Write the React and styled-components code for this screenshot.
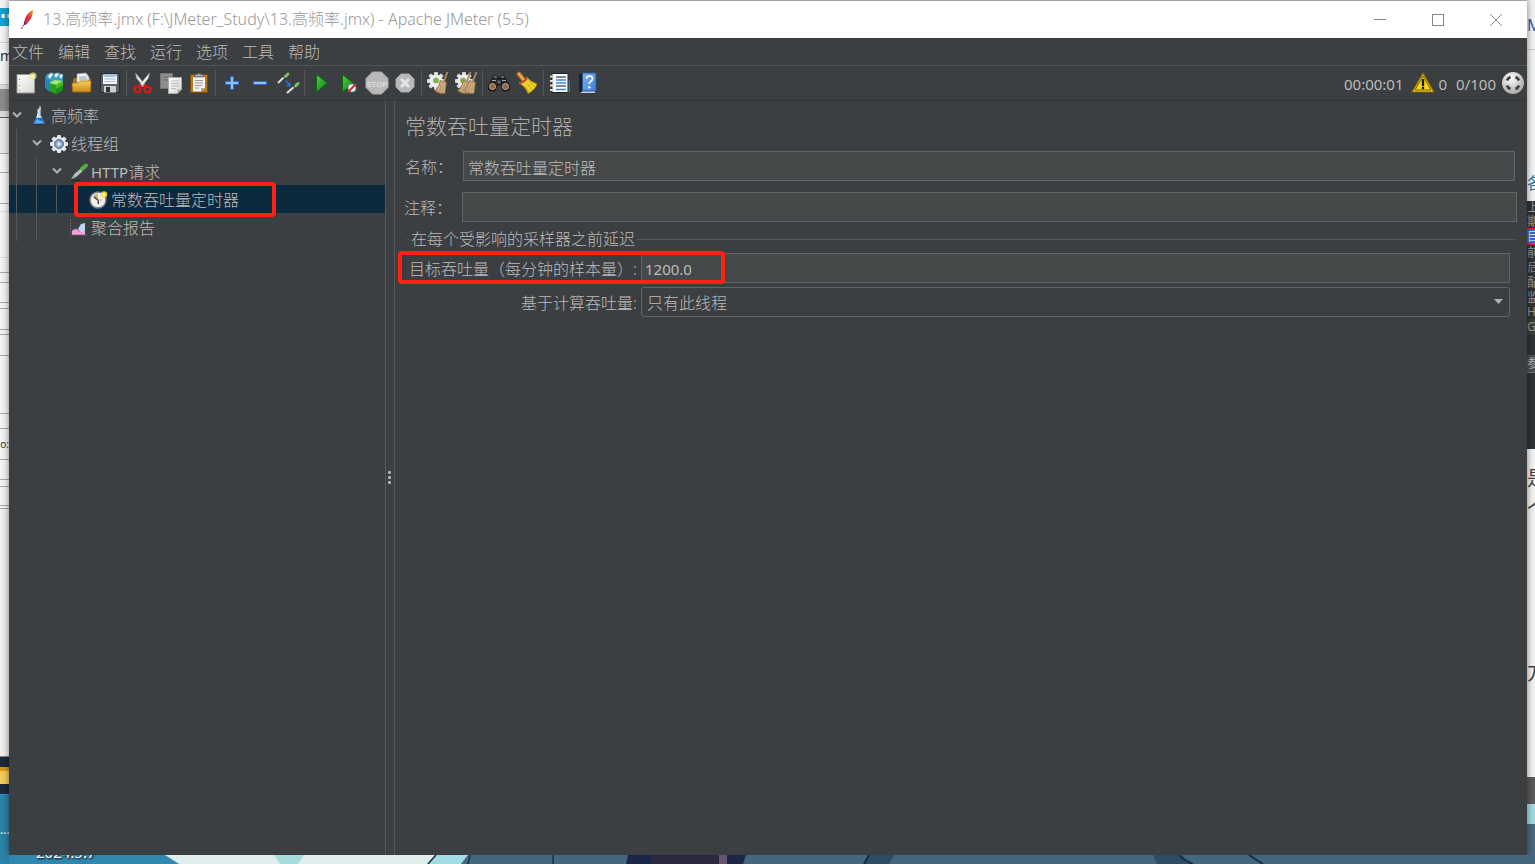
import React from "react";
import styled, { createGlobalStyle, css } from "styled-components";

const Global = createGlobalStyle`
  * { box-sizing: border-box; }
  body { margin: 0; overflow: hidden; }
  body, button, input, select {
    font-family: "Noto Sans", "Noto Sans CJK SC", sans-serif;
    font-size: 16px;
    font-weight: 300;
  }
`;

/* ---------- desktop behind the window ---------- */
const Desktop = styled.div`
  display: grid;
  grid-template-columns: 9px minmax(0, 1fr) 8px;
  grid-template-rows: minmax(0, 1fr) 9px;
  height: 100vh;
  background: #2c83a8;
`;
const Strip = styled.div`
  display: flex;
  flex-direction: column;
  overflow: hidden;
  grid-row: ${(p) => (p.$full ? "1 / 3" : "1")};
`;
const Slice = styled.div`
  flex: ${(p) => (p.$grow ? "1 1 0" : "none")};
  height: ${(p) => p.$h}px;
  display: flex;
  align-items: center;
  justify-content: ${(p) => (p.$end ? "flex-end" : "flex-start")};
  overflow: hidden;
  white-space: nowrap;
  line-height: 1;
  font-size: ${(p) => p.$size || 12}px;
  font-weight: 400;
  color: ${(p) => p.$color || "#444"};
  background: ${(p) => p.$bg || "#f4f4f4"};
  border-bottom: ${(p) => (p.$line ? `1px solid ${p.$line}` : "0")};
`;
const Wallpaper = styled.div`
  grid-column: 2 / 4;
  position: relative;
  overflow: hidden;
  svg { display: block; width: 100%; height: 9px; }
`;
const DesktopLabel = styled.span`
  position: absolute;
  left: 27px;
  bottom: 6px;
  line-height: 12px;
  font-size: 15px;
  font-weight: 400;
  color: #fff;
  text-shadow: 1px 1px 2px #000;
`;

/* ---------- window frame ---------- */
const Window = styled.main`
  position: relative;
  grid-column: 2;
  grid-row: 1;
  display: flex;
  flex-direction: column;
  min-height: 0;
  background: #3c3f41;
  color: #bbbbbb;
  border-top: 1px solid #a3a3a3;
  box-shadow: 0 0 7px rgba(0, 0, 0, 0.5);
`;
const TitleBar = styled.header`
  display: flex;
  align-items: center;
  height: 37px;
  flex: none;
  padding: 0 2px 0 9px;
  background: #fff;
  color: #999;
`;
const Title = styled.h1`
  flex: 1;
  margin: 0 0 0 7px;
  padding-bottom: 2px;
  font-size: 16px;
  font-weight: 300;
  line-height: 24px;
  white-space: nowrap;
`;
const Latin = styled.span`
  font-size: ${(p) => (p.$title ? 16 : 15)}px;
  font-weight: ${(p) => (p.$title ? 300 : 400)};
`;
const WindowButton = styled.button`
  display: grid;
  place-items: center;
  width: 58px;
  height: 36px;
  padding: 0;
  border: 0;
  background: none;
  color: #888;
`;
const MenuBar = styled.nav`
  display: flex;
  gap: 14px;
  flex: none;
  height: 28px;
  padding: 0 3px;
  border-bottom: 1px solid #515658;
`;
const MenuItem = styled.button`
  padding: 0;
  border: 0;
  background: none;
  color: inherit;
  line-height: 26px;
`;
const ToolBar = styled.div`
  display: flex;
  align-items: center;
  flex: none;
  height: 35px;
  padding: 0 2px 0 3px;
  border-bottom: 1px solid #333638;
`;
const ToolButton = styled.button`
  display: grid;
  place-items: center;
  width: 28px;
  height: 28px;
  padding: 0;
  border: 0;
  background: none;
`;
const Separator = styled.span`
  width: 1px;
  height: 26px;
  margin: 0 2px;
  background: #555758;
`;
const Status = styled.div`
  display: flex;
  align-items: center;
  margin-left: auto;
  font-size: 15px;
  font-weight: 400;
  line-height: 24px;
`;
const Count = styled.output`
  padding-top: 2px;
  margin: 0 5px 0 ${(p) => (p.$after ? 2 : 4)}px;
`;

/* ---------- tree ---------- */
const Body = styled.div`
  display: grid;
  grid-template-columns: 376px 10px minmax(0, 1fr);
  flex: 1;
  min-height: 0;
`;
const Tree = styled.ul`
  margin: 0;
  padding: 0;
  list-style: none;
`;
const TreeRow = styled.li`
  position: relative;
  display: flex;
  align-items: center;
  height: 28px;
  white-space: nowrap;
  background: ${(p) => (p.$selected ? "#0d293e" : "transparent")};
`;
const Guide = styled.span`
  width: 20px;
  height: 28px;
  padding-left: 7px;
  &::before {
    content: "";
    display: block;
    width: 1px;
    height: 100%;
    background: ${(p) => (p.$hidden ? "transparent" : "#54585a")};
  }
`;
const Toggle = styled.button`
  display: grid;
  place-items: center;
  width: 16px;
  height: 28px;
  margin-right: 4px;
  padding: 0;
  border: 0;
  background: none;
`;
const NodeIcon = styled.span`
  display: grid;
  width: 20px;
  height: 20px;
  padding-top: 1px;
  margin-right: 2px;
`;
const NodeName = styled.span`
  padding-top: 2px;
  line-height: 28px;
`;
const RedMark = styled.span`
  position: absolute;
  border: 4px solid #ff2113;
  border-radius: 4px;
  pointer-events: none;
  ${(p) =>
    p.$kind === "node"
      ? css`left: 65px; width: 202px; top: -3px; height: 35px;`
      : css`left: -11px; width: 327px; top: -2px; height: 33px;`}
`;
const Splitter = styled.div`
  display: flex;
  flex-direction: column;
  align-items: center;
  justify-content: center;
  gap: 2px;
  padding: 0 1px 2px 0;
  border: solid #55585a;
  border-width: 0 1px;
`;
const Dot = styled.i`
  width: 3px;
  height: 3px;
  border-radius: 1px;
  background: #b5b5b5;
`;

/* ---------- editor panel ---------- */
const Panel = styled.section`
  display: flex;
  flex-direction: column;
  min-width: 0;
`;
const Heading = styled.h2`
  margin: 11px 10px;
  font-size: 21px;
  line-height: 28px;
  font-weight: 300;
  color: #acacac;
`;
const FieldRow = styled.div`
  display: grid;
  grid-template-columns: 58px minmax(0, 1fr);
  align-items: center;
  padding: ${(p) => (p.$wide ? "0 10px 0 9px" : "0 12px 0 10px")};
  margin-bottom: ${(p) => (p.$wide ? 7 : 11)}px;
`;
const Label = styled.label`
  padding-top: 2px;
  line-height: 28px;
  white-space: nowrap;
  text-align: ${(p) => (p.$right ? "right" : "left")};
`;
const TextField = styled.input`
  width: 100%;
  height: 30px;
  padding: 2px 4px 0 ${(p) => (p.$number ? 3 : 4)}px;
  border: 1px solid #646464;
  border-radius: 0;
  outline: 0;
  background: #45494a;
  color: #bbbbbb;
  font-size: ${(p) => (p.$number ? 15 : 16)}px;
  font-weight: ${(p) => (p.$number ? 400 : 300)};
`;
const Group = styled.fieldset`
  min-width: 0;
  margin: 0 12px;
  padding: 4px 5px 0 2px;
  border: 0;
  border-top: 1px solid #55585a;
`;
const Legend = styled.legend`
  padding: 0 2px;
  line-height: 20px;
`;
const GroupGrid = styled.div`
  position: relative;
  display: grid;
  grid-template-columns: 228px minmax(0, 1fr);
  gap: 4px;
`;
const SelectBox = styled.div`
  position: relative;
  svg { position: absolute; right: 7px; top: 12px; pointer-events: none; }
`;
const Select = styled.select`
  display: block;
  width: 100%;
  height: 30px;
  padding: 2px 5px 0;
  appearance: none;
  border: 1px solid #646464;
  border-radius: 3px;
  outline: 0;
  background: #3c3f41;
  color: #bbbbbb;
`;

/* ---------- drawings ---------- */
const Svg = ({ children, size = 24 }) => (
  <svg width={size} height={size} viewBox={`0 0 ${size} ${size}`} aria-hidden="true">{children}</svg>
);

const Defs = () => (
  <svg width="0" height="0" style={{ position: "absolute" }} aria-hidden="true">
    <defs>
      <linearGradient id="paper" x1="0" y1="0" x2="1" y2="1"><stop offset="0" stopColor="#fff" /><stop offset="1" stopColor="#d6d6d2" /></linearGradient>
      <linearGradient id="gold" x1="0" y1="0" x2="0" y2="1"><stop offset="0" stopColor="#f8cf62" /><stop offset="1" stopColor="#c98a12" /></linearGradient>
      <linearGradient id="green" x1="0" y1="0" x2="1" y2="1"><stop offset="0" stopColor="#56d04c" /><stop offset="1" stopColor="#067a08" /></linearGradient>
      <linearGradient id="blue" x1="0" y1="0" x2="1" y2="1"><stop offset="0" stopColor="#7fb2ee" /><stop offset="1" stopColor="#3f7fd6" /></linearGradient>
      <linearGradient id="feather" gradientUnits="userSpaceOnUse" x1="5" y1="20" x2="14" y2="3"><stop offset="0" stopColor="#5c2272" /><stop offset=".3" stopColor="#b81a48" /><stop offset=".65" stopColor="#d8262c" /><stop offset="1" stopColor="#f69923" /></linearGradient>
      <radialGradient id="ball" cx=".4" cy=".3" r=".7"><stop offset="0" stopColor="#fff" /><stop offset="1" stopColor="#a9a9a9" /></radialGradient>
    </defs>
  </svg>
);

const gearTeeth = (cx, cy, r, fill) =>
  [0, 45, 90, 135].map((a) => (
    <rect key={a} x={cx - 2} y={cy - r} width="4" height={r * 2} rx="1" fill={fill} transform={`rotate(${a} ${cx} ${cy})`} />
  ));

const BroomShape = ({ x = 0 }) => (
  <g transform={`translate(${x} 0)`}>
    <path d="M20.500 1L17 10" stroke="#b08a5c" strokeWidth="1.800" />
    <path d="M13 9.500l6.500 1.500-1.500 11.500c-4 .5-8-.5-10.500-3C11 17.500 12.500 13.500 13 9.500z" fill="#bb9668" stroke="#8a6a42" strokeWidth=".6" />
    <path d="M14.500 11l-3.500 9M16.200 11.500l-2.200 10M18 12l-1.500 10" stroke="#dcc097" strokeWidth=".8" />
  </g>
);

const icons = {
  new: <><path d="M3 3.500h17.500v18.500H3z" fill="url(#paper)" stroke="#9a9a94" /><path d="M5.500 8v1M5.500 14v1M5.500 19v1" stroke="#777" /><circle cx="19" cy="5" r="3.600" fill="#f4e97c" opacity=".75" /><circle cx="19" cy="5" r="1.500" fill="#fffbd0" /></>,
  templates: <><path d="M3 7l2-4 5-1.500 2 1 4-1 5 2v7l-8 5-7 3-3-4z" fill="#3b9cc6" /><path d="M3 7l5 2v12l-5-4z" fill="#2387b8" /><path d="M6 5l3-3 2 1-3 5M12 4l3-2 2 1-3 4M17 5l2-2 2 1-2 4" fill="#e6f3f8" stroke="#8db8c8" strokeWidth=".5" /><path d="M7 12l6-3 8 1-7 4z" fill="#a5e66b" /><path d="M7 12l7 2v9l-7-3z" fill="#2aa01e" /><path d="M14 14l7-4v9l-7 4z" fill="#42bd24" /><path d="M14 18l7-4v5l-7 4z" fill="#1f8f18" /></>,
  open: <><path d="M3 9l1-2h16l1 2v12H3z" fill="#a87313" /><path d="M7 3l9-1 3 4v8H7z" fill="url(#paper)" stroke="#aaa" strokeWidth=".6" /><path d="M9 6h7M9 8h8" stroke="#8ca3b8" /><path d="M2 13q0-1 1-1h5l2-2h10q1 0 1 1l-.5 9q0 1-1 1h-16q-1 0-1-1z" fill="url(#gold)" stroke="#a26d06" strokeWidth=".7" /></>,
  save: <><rect x="2.500" y="2.500" width="19" height="19" rx="1.500" fill="#5b6066" stroke="#25282b" /><path d="M5 3h14v10H5z" fill="#f3f6fa" /><path d="M6.500 5.500h11M6.500 8h11M6.500 10.500h11" stroke="#9fbdd8" /><path d="M5 3h14v2H5z" fill="#9fc2e2" /><path d="M6 15h12v6.500H6z" fill="#cccfcf" /><path d="M8 16h4v5H8z" fill="#333" /></>,
  cut: <><path d="M4.500 2l1 5 7 9 2-2z" fill="#e4e6e5" stroke="#939896" strokeWidth=".5" /><path d="M18.500 2l-1 5-7 9-2-2z" fill="#f4f4f4" stroke="#939896" strokeWidth=".5" /><path d="M10.500 14l-3 1.500M12.500 14l3 1.500" stroke="#cf1515" strokeWidth="2.500" /><ellipse cx="6.500" cy="18.500" rx="3" ry="2.800" fill="none" stroke="#d81616" strokeWidth="2.300" /><ellipse cx="16.500" cy="18.500" rx="3" ry="2.800" fill="none" stroke="#d81616" strokeWidth="2.300" /></>,
  copy: <><path d="M1.500 2.500h12v15h-12z" fill="#8e908e" stroke="#737573" /><path d="M4 6h8M4 9h6" stroke="#686a68" /><path d="M9.500 6.500h13v12l-4 4h-9z" fill="url(#paper)" stroke="#aaa" /><path d="M12 10h8M12 12.500h8M12 15h8M12 17.500h5" stroke="#bbb" /><path d="M22.500 18.500h-4v4z" fill="#aaa" /></>,
  paste: <><rect x="3.500" y="3.500" width="17" height="18" rx="1" fill="#ba781b" stroke="#7a4b09" /><path d="M6 6h12v11l-4 3.500H6z" fill="#f2f2ee" /><path d="M8 9.500h8M8 12h8M8 14.500h7M8 17h4" stroke="#999" /><path d="M18 17h-4v3.500z" fill="#aaa" /><path d="M7.500 6V3.500H10C10 2 14 2 14 3.500h2.500V6z" fill="#a4a79e" stroke="#555" strokeWidth=".7" /></>,
  plus: <path d="M10.500 5.500h3v5h5v3h-5v5h-3v-5h-5v-3h5z" fill="#91bfff" stroke="#2f6bc0" />,
  minus: <rect x="5.500" y="10.500" width="13" height="3" fill="#91bfff" stroke="#2f6bc0" />,
  toggle: <><path d="M2 12l7-7" stroke="#d8dfdb" strokeWidth="2" /><path d="M6.500 4.500l4 4" stroke="#30402c" strokeWidth="1.300" /><path d="M9.500 5.500l2.500-2.500" stroke="#7cc466" strokeWidth="2.600" strokeLinecap="round" /><path d="M11 22l8-7" stroke="#d8dfdb" strokeWidth="2.200" /><path d="M16.500 14l3.500 4" stroke="#30402c" strokeWidth="1.300" /><path d="M19.500 15l2.500-2.500" stroke="#7cc466" strokeWidth="2.800" strokeLinecap="round" /><path d="M9.500 9.500l4 4" stroke="#2f70e0" strokeWidth="1.200" /><path d="M14.500 11v4.500H10z" fill="#2f70e0" /></>,
  run: <path d="M7.500 3.500L18.500 12 7.500 21z" fill="url(#green)" stroke="#08670d" />,
  runNow: <><path d="M5.500 3.500L17 12.500 5.500 21z" fill="url(#green)" stroke="#08670d" /><circle cx="15" cy="17" r="4" fill="#e9f0f9" stroke="#7f9fc4" /><path d="M11 21l8-8" stroke="#d72323" strokeWidth="1.800" /></>,
  stop: <><path d="M7.500 1h9L23 7.500v9L16.500 23h-9L1 16.500v-9z" fill="#b9b9b9" stroke="#adadad" /><text x="12" y="15.500" textAnchor="middle" fontSize="8" fontWeight="700" fontFamily="Liberation Sans" fill="#dcdcdc">STOP</text></>,
  shutdown: <><path d="M8 3h8l5 5v8l-5 5H8l-5-5V8z" fill="#b9b9b9" stroke="#adadad" /><path d="M8 8l8 8M16 8l-8 8" stroke="#e5e5e5" strokeWidth="3" /></>,
  clear: <>{gearTeeth(10, 10, 9, "#dadbda")}<circle cx="10" cy="10" r="6.500" fill="#f1f1ef" /><circle cx="10" cy="9.500" r="2.600" fill="#7bb92f" stroke="#96a486" /><BroomShape x={1} /></>,
  clearAll: <>{gearTeeth(10, 10, 9, "#dadbda")}<circle cx="10" cy="10" r="6.500" fill="#f1f1ef" /><circle cx="9" cy="9.500" r="2.600" fill="#7bb92f" stroke="#96a486" /><BroomShape x={-4} /><BroomShape x={2} /></>,
  find: <><path d="M4 10l3-5h3l2 3 2-3h3l3 5 3 6q0 3-3 4h-4l-2-6h-4l-2 6H4q-3-1-3-4z" fill="#252525" stroke="#111" strokeWidth=".7" /><path d="M7 6h3M14 6h3M5 9.500h4M15 9.500h4" stroke="#aaa" /><circle cx="5.500" cy="15.500" r="3" fill="#a0623c" stroke="#cecece" strokeWidth=".7" /><circle cx="18.500" cy="15.500" r="3" fill="#a0623c" stroke="#cecece" strokeWidth=".7" /><circle cx="12" cy="11" r="1.800" fill="#666" /></>,
  broom: <><path d="M4 3l4 5" stroke="#ae6c24" strokeWidth="4.500" strokeLinecap="round" /><path d="M4 3l4 5" stroke="#e9a84e" strokeWidth="2.500" strokeLinecap="round" /><path d="M4 12q5-1 8-6 2 4 10 7-2 6-9 9.500Q11 16 4 12z" fill="#f0d32d" stroke="#a98d08" strokeWidth=".8" /><path d="M4 12q5-1 8-6l1 1.600q-3 4.500-7.500 5.400z" fill="#cf3d1c" /><path d="M9 14l5 7M12 12l5 7M14 9.500l5.500 6.500" stroke="#b99a12" strokeWidth=".8" /></>,
  notebook: <><path d="M19 9h3v6h-3z" fill="#2b6cd8" /><path d="M19 15h3v6h-3z" fill="#26a32c" /><path d="M4 2.500h16v19H4z" fill="#fff" stroke="#222" /><path d="M8 6h10M8 15h10" stroke="#111" strokeWidth="1.200" /><path d="M8 9h10M8 12h10M8 18.500h10" stroke="#3384ee" strokeWidth="1.500" /><path d="M2 5.500h4M2 10h4M2 14.500h4M2 19h4" stroke="#ddd" strokeWidth="2" /></>,
  help: <><path d="M3 3l4-1v18l-4 2z" fill="#182233" /><path d="M4 22l3-2h12v2z" fill="#c8ced3" /><path d="M6.500 2h13.500v18H6.500z" fill="url(#blue)" stroke="#295a9e" /><path d="M10.500 8q0-3 3-3t3 2.500q0 2-2 3-1.200.7-1.200 2.500" fill="none" stroke="#fff" strokeWidth="1.600" /><circle cx="13.300" cy="16.200" r="1.200" fill="#fff" /></>,
  warning: <><path d="M12 2L23 21H1z" fill="#ffd21b" stroke="#80680a" strokeWidth="1.200" strokeLinejoin="round" /><path d="M12 5l8 14H4z" fill="#ffd60a" stroke="#4c4206" strokeWidth=".8" /><path d="M12 9v5" stroke="#151515" strokeWidth="2.400" strokeLinecap="round" /><circle cx="12" cy="17" r="1.300" fill="#151515" /></>,
  target: <><circle cx="12" cy="12" r="11" fill="url(#ball)" /><path d="M6 9.500Q7 7 9.500 6M14.500 6Q17 7 18 9.500M18 14.500Q17 17 14.500 18M9.500 18Q7 17 6 14.500" fill="none" stroke="#3e3e3e" strokeWidth="2.800" /></>,
};

const nodeIcons = {
  flask: <><ellipse cx="10" cy="17.500" rx="7" ry="1.500" fill="#292c2e" /><path d="M8.500 3h3v6l4 8.500h-11l4-8.500z" fill="#c7dae8" stroke="#87a7bd" strokeWidth=".6" /><path d="M6.500 12h7l2 5.500H4.500z" fill="#1768ca" /><path d="M7 14q2-2 3 0t3 0l1 3H6z" fill="#5dabf0" /><path d="M9 8l-1 3" stroke="#fff" /><path d="M11 .5v3" stroke="#dae4ea" strokeWidth="1.500" /></>,
  gear: <>{gearTeeth(10, 10, 9, "#dfe3e8")}<circle cx="10" cy="10" r="7" fill="#e9ecef" /><circle cx="10" cy="10" r="4.500" fill="#86a3cc" stroke="#4a6894" /><path d="M8.500 7.500l4 2.500-4 2.500z" fill="#f2f6fb" /></>,
  pipette: <><path d="M2 18.500h9" stroke="#272a2c" strokeWidth="1.500" /><path d="M2.500 17l3-5 6-5 2 2-6 5.500z" fill="#d5dad7" stroke="#8a938e" strokeWidth=".6" /><path d="M5 15l6-6" stroke="#8c9691" strokeWidth=".8" /><path d="M10.500 4.500l5 5" stroke="#394a35" strokeWidth="1.600" /><path d="M13 7l4-3.500" stroke="#58ab4c" strokeWidth="4" strokeLinecap="round" /></>,
  clock: <><circle cx="9" cy="10" r="8" fill="#eeeeea" stroke="#777989" strokeWidth="1.400" /><path d="M9 10L4 6.500q2-3 5-3z" fill="#d3b665" /><path d="M5 7l4 3 .5 4" fill="none" stroke="#343434" strokeWidth="1.300" /><path d="M11 10h1.500" stroke="#c55" /><circle cx="15" cy="4.500" r="3.200" fill="#f5e52c" opacity=".9" /><circle cx="15" cy="4.500" r="1.200" fill="#fffdc8" /></>,
  report: <><path d="M1.500 1v16H18" fill="none" stroke="#666" strokeDasharray="2 1" /><path d="M3 16.500v-4l4-2 3 2 6-8v12z" fill="#e883c4" /><path d="M9 11l3-5 4-1v8l-3 2z" fill="#bcd6f4" /><path d="M3 16.500v-3l4-2 3 3 3 0 3-1v3z" fill="#f4a6d8" /></>,
};

/* ---------- data ---------- */
const toolGroups = [
  [["new", "新建"], ["templates", "模板"], ["open", "打开"], ["save", "保存"]],
  [["cut", "剪切"], ["copy", "复制"], ["paste", "粘贴"]],
  [["plus", "展开"], ["minus", "折叠"], ["toggle", "切换"]],
  [["run", "启动"], ["runNow", "不停顿启动"], ["stop", "停止"], ["shutdown", "关闭"]],
  [["clear", "清除"], ["clearAll", "清除全部"]],
  [["find", "搜索"], ["broom", "重置搜索"]],
  [["notebook", "函数助手"], ["help", "帮助"]],
];
const menus = ["文件", "编辑", "查找", "运行", "选项", "工具", "帮助"];
const nodes = [
  { depth: 0, icon: "flask", name: "高频率", open: true },
  { depth: 1, icon: "gear", name: "线程组", open: true },
  { depth: 2, icon: "pipette", latin: "HTTP", name: "请求", open: true },
  { depth: 3, icon: "clock", name: "常数吞吐量定时器", selected: true },
  { depth: 2, icon: "report", name: "聚合报告" },
];
const G = "#a8a8a8";
const D = "#303234";
const leftSlices = [
  { h: 8 }, { h: 15, bg: "#1ba1d6", text: "••", color: "#fff", size: 16 }, { h: 3, bg: "#1ba1d6" }, { h: 17, line: "#d0d0d0" },
  { h: 25, text: "m", color: "#333", size: 14 }, { h: 17, line: "#c4c4c4" }, { h: 4, bg: "#ddd" },
  { h: 22, bg: "#8c8c8c" }, { h: 7, bg: "#ddd", line: "#555" },
  { h: 36, bg: "#e9e9e9", line: G }, { h: 19, line: G }, { h: 31, line: G }, { h: 8, line: "#ddd" }, { h: 46, line: "#ddd" },
  { h: 15, line: G }, { h: 10, line: G }, { h: 20, line: G }, { h: 6, line: G }, { h: 21, line: G }, { h: 5, line: G },
  { h: 21, line: G }, { h: 58, line: G }, { h: 15, line: G }, { h: 31, line: G, text: "o:", size: 10, end: true, color: "#333" }, { h: 20, line: G }, { h: 7, line: G },
  { h: 19, line: G }, { h: 3, line: G }, { h: 248, bg: "#f0f0f0", line: "#888" },
  { h: 10, bg: "#1b2b3a" }, { h: 4, bg: "#d99a1c" }, { h: 13, bg: "#f3cb5d" }, { h: 11, bg: "#1b2b3a", line: "#1a97e0" },
  { h: 78, bg: "#2c83a8", text: "...", color: "#fff", grow: true },
];
const rightSlices = [
  { h: 50, text: "M", color: "#2d5fae", size: 16, line: "#ccc" }, { h: 115 },
  { h: 36, text: "各", color: "#2d79b8", size: 16 },
  { h: 14, bg: D, text: "上", color: "#999" }, { h: 14, bg: D, text: "斯", color: "#999", line: "#e02020" },
  { h: 16, bg: "#3f69c4", text: "目", color: "#ddd", line: "#e02020" },
  { h: 16, bg: D, text: "前", color: "#999" }, { h: 14, bg: D, text: "后", color: "#888" },
  { h: 16, bg: D, text: "配", color: "#999" }, { h: 14, bg: D, text: "监", color: "#999" },
  { h: 14, bg: D, text: "HT", color: "#999" }, { h: 16, bg: "#3a3d3f", text: "G", color: "#999" },
  { h: 20, bg: D }, { h: 18, bg: "#4c4f51", text: "参", color: "#bbb", line: "#777" },
  { h: 76, bg: D },
  { h: 16 }, { h: 28, text: "是", size: 20 }, { h: 34, text: "个", size: 20 }, { h: 130 }, { h: 32, text: "方", size: 20 }, { h: 88 },
  { h: 27, bg: "#5a5a5a" }, { h: 20, bg: "#a4dbe4" }, { h: 32, bg: "#48697f", grow: true },
];

const renderSlices = (list) =>
  list.map((s, i) => (
    <Slice key={i} $h={s.h} $bg={s.bg} $line={s.line} $color={s.color} $size={s.size} $end={s.end} $grow={s.grow}>{s.text}</Slice>
  ));

export default function App() {
  return (
    <Desktop>
      <Global />
      <Defs />
      <Strip $full aria-hidden="true">{renderSlices(leftSlices)}</Strip>
      <Window>
        <TitleBar>
          <svg width="18" height="24" viewBox="0 0 18 24" aria-hidden="true">
            <path d="M6 17C5.500 11 10 4 14.500 2c1.500 4-2.500 11-7 15z" fill="url(#feather)" />
            <path d="M7 14L3.500 21" stroke="#5c2272" strokeDasharray="2 1" />
            <path d="M12.500 5.500L8 14" stroke="#f6a0a0" strokeWidth=".5" />
          </svg>
          <Title>
            <Latin $title>13.</Latin>高频率<Latin $title>.jmx (F:\JMeter_Study\13.</Latin>高频率<Latin $title>.jmx) - Apache JMeter (5.5)</Latin>
          </Title>
          <WindowButton aria-label="最小化"><svg width="12" height="12"><path d="M0 5.500h12" stroke="currentColor" /></svg></WindowButton>
          <WindowButton aria-label="最大化"><svg width="12" height="12"><rect x=".5" y=".5" width="11" height="11" fill="none" stroke="currentColor" /></svg></WindowButton>
          <WindowButton aria-label="关闭"><svg width="12" height="12"><path d="M0 0l12 12M12 0L0 12" stroke="currentColor" /></svg></WindowButton>
        </TitleBar>
        <MenuBar>{menus.map((m) => <MenuItem key={m}>{m}</MenuItem>)}</MenuBar>
        <ToolBar>
          {toolGroups.map((group, i) => (
            <React.Fragment key={i}>
              {i > 0 && <Separator />}
              {group.map(([id, label]) => (
                <ToolButton key={id} aria-label={label}><Svg>{icons[id]}</Svg></ToolButton>
              ))}
            </React.Fragment>
          ))}
          <Status>
            <Count>00:00:01</Count>
            <ToolButton aria-label="警告"><Svg>{icons.warning}</Svg></ToolButton>
            <Count $after>0</Count>
            <Count>0/100</Count>
            <Svg>{icons.target}</Svg>
          </Status>
        </ToolBar>
        <Body>
          <Tree>
            {nodes.map((n) => (
              <TreeRow key={n.name} $selected={n.selected}>
                {Array.from({ length: n.depth }, (_, i) => <Guide key={i} />)}
                {n.open ? (
                  <Toggle aria-label="折叠">
                    <svg width="10" height="8"><path d="M1 1.500l4 4 4-4" fill="none" stroke="#afb1b3" strokeWidth="2" /></svg>
                  </Toggle>
                ) : (
                  <Guide $hidden />
                )}
                <NodeIcon><Svg size={20}>{nodeIcons[n.icon]}</Svg></NodeIcon>
                <NodeName>{n.latin && <Latin>{n.latin}</Latin>}{n.name}</NodeName>
                {n.selected && <RedMark $kind="node" />}
              </TreeRow>
            ))}
          </Tree>
          <Splitter><Dot /><Dot /><Dot /></Splitter>
          <Panel>
            <Heading>常数吞吐量定时器</Heading>
            <FieldRow>
              <Label htmlFor="name">名称：</Label>
              <TextField id="name" defaultValue="常数吞吐量定时器" />
            </FieldRow>
            <FieldRow $wide>
              <Label htmlFor="comment">注释：</Label>
              <TextField id="comment" defaultValue="" />
            </FieldRow>
            <Group>
              <Legend>在每个受影响的采样器之前延迟</Legend>
              <GroupGrid>
                <Label htmlFor="target" $right>目标吞吐量（每分钟的样本量）:</Label>
                <TextField id="target" $number defaultValue="1200.0" />
                <Label htmlFor="based" $right>基于计算吞吐量:</Label>
                <SelectBox>
                  <Select id="based" defaultValue="只有此线程"><option>只有此线程</option></Select>
                  <svg width="9" height="6"><path d="M0 0h9L4.500 5z" fill="#afb1b3" /></svg>
                </SelectBox>
                <RedMark />
              </GroupGrid>
            </Group>
          </Panel>
        </Body>
      </Window>
      <Strip aria-hidden="true">{renderSlices(rightSlices)}</Strip>
      <Wallpaper aria-hidden="true">
        <svg viewBox="0 0 1526 9" preserveAspectRatio="none">
          <path d="M0 0h1526v9H0z" fill="#446780" />
          <path d="M0 0h158l12 9H0z" fill="#3187ad" />
          <path d="M156 0h270l-8 9H170z" fill="#dfeeed" />
          <path d="M265 0h30l-6 9h-18z" fill="#a7dcdc" />
          <path d="M427 0h32l-7 9h-34z" fill="#a3dce4" />
          <path d="M427 0l-8 9M461 0l-2 9M544 0v9" stroke="#1d3346" strokeWidth="1.500" />
          <path d="M619 0h118l-3 9H617z" fill="#1c2748" />
          <path d="M642 0h72v9h-72z" fill="#2b2840" />
          <path d="M710 0h8v9h-8z" fill="#665566" />
          <path d="M860 0h25l-5 9h-25zM1144 0h26l14 9h-36z" fill="#2f4c66" />
          <path d="M1170 0q6 6 14 9M1240 0l14 9M860 0l-5 9" stroke="#182c40" fill="none" strokeWidth="2" />
        </svg>
        <DesktopLabel>2024.5.7</DesktopLabel>
      </Wallpaper>
    </Desktop>
  );
}
